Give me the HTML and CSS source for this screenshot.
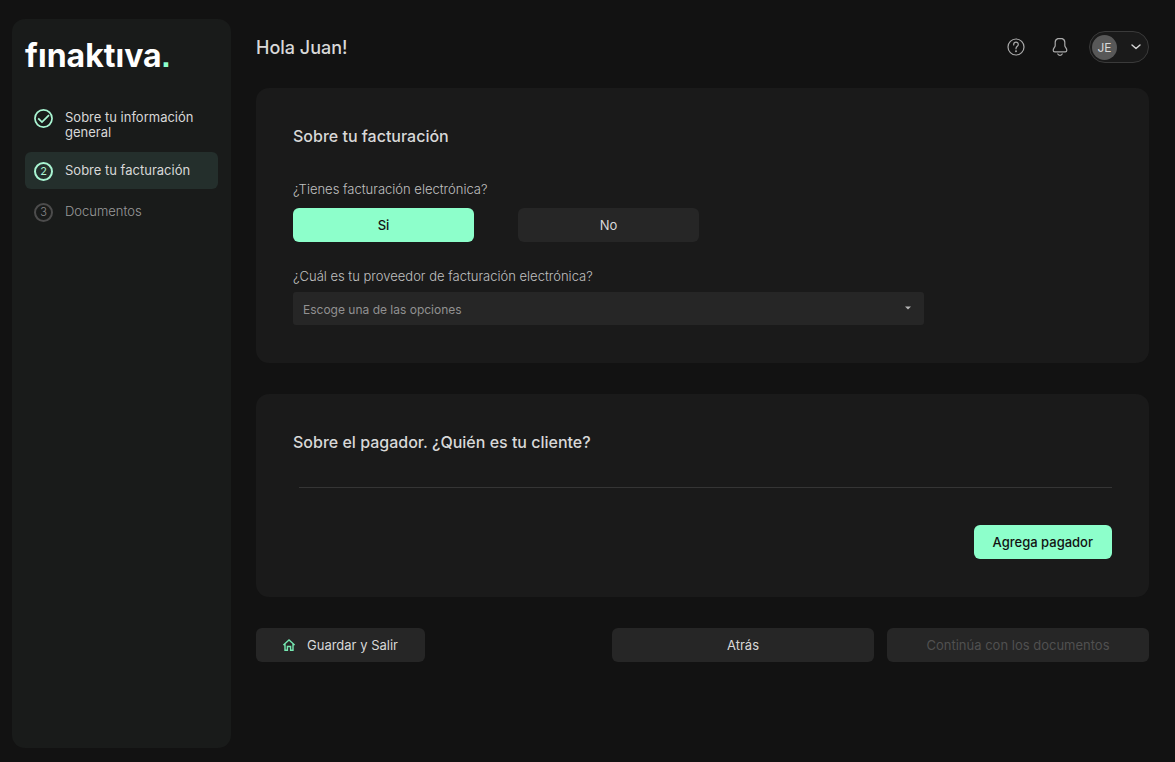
FILE: index.html
```html
<!DOCTYPE html>
<html lang="es">
<head>
  <meta charset="UTF-8" />
  <meta name="viewport" content="width=device-width, initial-scale=1.0"/>
  <title>Finaktiva</title>
  <link rel="stylesheet" href="styles.css">
</head>
<body>
  <div class="layout">
    <aside class="sidebar">
      <div class="logo">fınaktıva<span class="logo-dot">.</span></div>
      <ol class="steps">
        <li class="step step-done">
          <svg class="step-icon" viewBox="0 0 20 20" fill="none" stroke="currentColor">
            <circle cx="10" cy="10" r="9" stroke-width="1.8"/>
            <path d="M4.400 9.800l4 4 7.400-7.400" stroke-width="1.8"/>
          </svg>
          <span>Sobre tu información general</span>
        </li>
        <li class="step step-active">
          <span class="step-icon step-number">2</span>
          <span>Sobre tu facturación</span>
        </li>
        <li class="step step-pending">
          <span class="step-icon step-number">3</span>
          <span>Documentos</span>
        </li>
      </ol>
    </aside>

    <main class="content">
      <header class="topbar">
        <h1>Hola Juan!</h1>
        <div class="topbar-actions">
          <button type="button" class="icon-btn" aria-label="Ayuda">
            <svg width="18" height="18" viewBox="0 0 18 18" fill="none" stroke="currentColor" stroke-width="1.2" stroke-linecap="round">
              <circle cx="9" cy="9" r="8"/>
              <path d="M6.7 7V6.400a2.300 2.300 0 0 1 4.600 0c0 1.800-2.300 1.900-2.300 4v.4"/>
              <circle cx="9" cy="13.200" r=".4" fill="currentColor"/>
            </svg>
          </button>
          <button type="button" class="icon-btn" aria-label="Notificaciones">
            <svg width="18" height="20" viewBox="0 0 18 20" fill="none" stroke="currentColor" stroke-width="1.2" stroke-linecap="round" stroke-linejoin="round">
              <path d="M6.800 1.600h4.400c1.700.6 2.600 2 2.600 3.700v3.200c0 1.700 2 2.800 2 4.700 0 1-.6 1.700-1.600 1.700H3.800c-1 0-1.600-.7-1.600-1.700 0-1.900 2-3 2-4.700V5.300c0-1.700.9-3.100 2.600-3.700z"/>
              <path d="M6.800 17c.5.8 1.300 1.300 2.200 1.300s1.700-.5 2.200-1.300"/>
            </svg>
          </button>
          <button type="button" class="user-menu" aria-label="Menú de usuario">
            <span class="avatar">JE</span>
            <svg width="10" height="6" viewBox="0 0 10 6" fill="none" stroke="currentColor" stroke-width="1.4" stroke-linecap="round" stroke-linejoin="round">
              <path d="M1 1l4 3.600L9 1"/>
            </svg>
          </button>
        </div>
      </header>

      <section class="card">
        <h2>Sobre tu facturación</h2>
        <div class="field" role="group" aria-labelledby="facturacion-label">
          <span class="label" id="facturacion-label">¿Tienes facturación electrónica?</span>
          <div class="options">
            <button type="button" class="btn btn-primary">Si</button>
            <button type="button" class="btn">No</button>
          </div>
        </div>
        <div class="field">
          <label class="label" for="proveedor">¿Cuál es tu proveedor de facturación electrónica?</label>
          <div class="select">
            <select id="proveedor">
              <option>Escoge una de las opciones</option>
            </select>
            <svg class="select-arrow" width="6" height="4" viewBox="0 0 6 4"><path d="M0 .5h6L3 3.500z" fill="currentColor"/></svg>
          </div>
        </div>
      </section>

      <section class="card">
        <h2>Sobre el pagador. ¿Quién es tu cliente?</h2>
        <hr class="divider" />
        <div class="card-actions">
          <button type="button" class="btn btn-primary btn-add">Agrega pagador</button>
        </div>
      </section>

      <footer class="footer">
        <button type="button" class="btn btn-exit">
          <svg width="12" height="12" viewBox="0 0 12 12" fill="none" stroke="currentColor" stroke-width="1.400">
            <path d="M.4 6.100L6 1l5.600 5.100M2 5v6.200h2.400V7.500h3.200v3.700H10V5"/>
          </svg>
          Guardar y Salir
        </button>
        <div class="footer-nav">
          <button type="button" class="btn">Atrás</button>
          <button type="button" class="btn" disabled>Continúa con los documentos</button>
        </div>
      </footer>
    </main>
  </div>
</body>
</html>
```

FILE: styles.css
```css
:root {
  --bg: #121212;
  --sidebar-bg: #191b1a;
  --card-bg: #1a1a1a;
  --control-bg: #262626;
  --active-bg: #242f2c;
  --accent: #8dffcb;
  --text: #d8d8d8;
  --muted: #9a9a9a;
}

* {
  box-sizing: border-box;
}

body {
  margin: 0;
  background: var(--bg);
  color: var(--text);
  font-family: Inter, "Liberation Sans", sans-serif;
  font-size: 13px;
  line-height: 15px;
}

h1, h2 {
  margin: 0;
  font-weight: 500;
}

button, select {
  font: inherit;
  color: inherit;
  border: none;
  cursor: pointer;
}

.layout {
  display: flex;
  gap: 25px;
  min-height: 100vh;
  padding: 19px 26px 14px 12px;
}

/* sidebar */
.sidebar {
  flex: 0 0 219px;
  padding: 19px 13px;
  border-radius: 13px;
  background: var(--sidebar-bg);
}

.logo {
  color: #fff;
  font-size: 32px;
  font-weight: 700;
  line-height: 36px;
}

.logo-dot {
  color: var(--accent);
  font-family: "Liberation Sans", sans-serif;
}

.steps {
  display: flex;
  flex-direction: column;
  gap: 4px;
  margin: 25px 0 0;
  padding: 0;
  list-style: none;
}

.step {
  display: flex;
  align-items: flex-start;
  gap: 12px;
  padding: 11px 9px;
  border-radius: 6px;
}

.step-done {
  padding-bottom: 8px;
}

.step-active {
  background: var(--active-bg);
}

.step-pending {
  color: var(--muted);
  font-weight: 300;
}

.step-icon {
  flex: none;
  width: 19px;
  height: 19px;
  margin: -1px 0 -3px;
  color: #a9f5d2;
}

.step-number {
  display: flex;
  align-items: center;
  justify-content: center;
  border: 2px solid currentColor;
  border-radius: 50%;
  font-size: 11px;
}

.step-pending .step-icon {
  color: #8a8a8a;
  border-color: #4c4c4c;
}

/* top bar */
.content {
  flex: 1;
  min-width: 0;
}

.topbar {
  display: flex;
  align-items: center;
  justify-content: space-between;
  margin: 12px 0 25px;
}

.topbar h1 {
  padding-top: 2px;
  font-size: 18px;
  line-height: 24px;
}

.topbar-actions {
  display: flex;
  align-items: center;
  gap: 14px;
}

.icon-btn {
  display: flex;
  align-items: center;
  justify-content: center;
  width: 30px;
  height: 30px;
  padding: 0;
  background: none;
  color: #aaa;
}

.user-menu {
  display: flex;
  align-items: center;
  justify-content: space-between;
  width: 60px;
  height: 32px;
  padding: 0 7px 0 2px;
  border: 1px solid #3a3a3a;
  border-radius: 16px;
  background: var(--card-bg);
}

.avatar {
  display: flex;
  align-items: center;
  justify-content: center;
  width: 25px;
  height: 25px;
  border-radius: 50%;
  background: #585858;
  font-size: 12px;
}

/* cards */
.card {
  margin-bottom: 31px;
  padding: 37px 37px 38px;
  border-radius: 13px;
  background: var(--card-bg);
}

.card h2 {
  font-size: 16px;
  line-height: 22px;
}

.field {
  max-width: 631px;
  margin-top: 27px;
}

.card h2 + .field {
  margin-top: 35px;
}

.label {
  display: block;
  margin-bottom: 11px;
  color: #c0c0c0;
  font-weight: 300;
}

.field .select {
  margin-top: -3px;
}

.options {
  display: flex;
  gap: 44px;
}

.options .btn {
  flex: 0 1 181px;
}

.btn {
  display: flex;
  align-items: center;
  justify-content: center;
  height: 34px;
  padding: 0 19px;
  border-radius: 6px;
  background: var(--control-bg);
}

.btn:disabled {
  color: #505050;
  cursor: default;
}

.btn-primary {
  background: var(--accent);
  color: #121212;
  font-weight: 500;
}

.select {
  position: relative;
}

.select select {
  width: 100%;
  height: 33px;
  padding: 2px 32px 0 10px;
  border-radius: 3px;
  background: var(--control-bg);
  color: #919191;
  font-size: 12px;
  appearance: none;
}

.select-arrow {
  position: absolute;
  top: 14px;
  right: 13px;
  color: #b5b5b5;
  pointer-events: none;
}

.divider {
  margin: 34px 0 37px 6px;
  border: none;
  border-top: 1px solid #353535;
}

.card-actions {
  display: flex;
  justify-content: flex-end;
}

/* footer */
.footer {
  display: flex;
  justify-content: space-between;
  gap: 24px;
}

.btn-exit {
  gap: 12px;
  padding: 0 27px;
}

.btn-exit svg {
  color: #76e8b2;
}

.footer-nav {
  display: flex;
  flex: 0 1 537px;
  gap: 13px;
}

.footer-nav .btn {
  flex: 1;
}
```
